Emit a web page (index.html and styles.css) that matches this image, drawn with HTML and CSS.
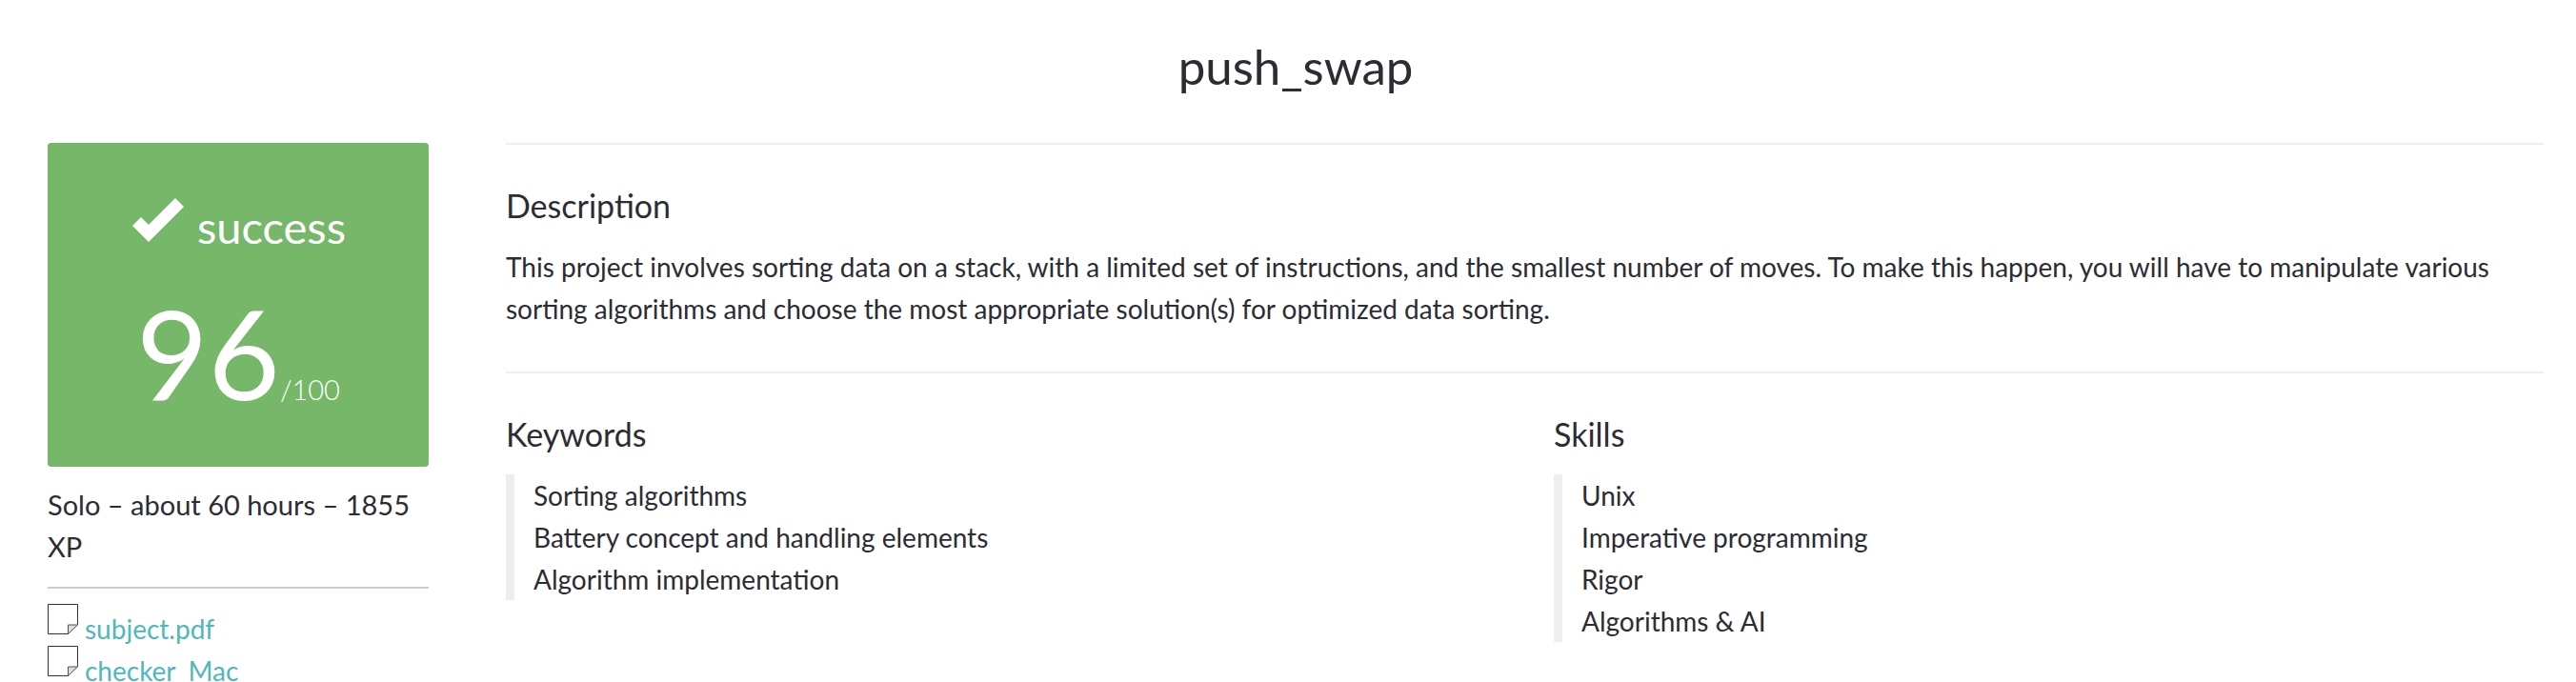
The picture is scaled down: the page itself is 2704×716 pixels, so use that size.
FILE: index.html
```html
<!DOCTYPE html>
<html lang="en">
<head>
    <meta charset="UTF-8">
    <title>push_swap</title>
    <link rel="stylesheet" href="styles.css">
</head>
<body>
    <h1 class="title">push_swap</h1>
    <div class="page">
        <aside class="side">
            <div class="grade">
                <div class="grade-status">
                    <svg class="check" viewBox="0 0 54 46"><path d="M0 29 L9 20 L17 28 L45 0 L54 9 L17 46 Z" fill="#fff"/></svg>
                    <span>success</span>
                </div>
                <div class="grade-mark"><span class="grade-num">96</span><span class="grade-max">/100</span></div>
            </div>
            <p class="meta">Solo – about 60 hours – 1855 XP</p>
            <hr class="side-rule">
            <ul class="files">
                <li>
                    <svg class="file-icon" viewBox="0 0 32 32"><path d="M.5.5H31.5V21.5L21.5 31.5H.5Z" fill="#fff" stroke="#333"/><path d="M21.5 31.5V22H31.5Z" fill="#ddd" stroke="#555"/></svg>
                    <a href="#">subject.pdf</a>
                </li>
                <li>
                    <svg class="file-icon" viewBox="0 0 32 32"><path d="M.5.5H31.5V21.5L21.5 31.5H.5Z" fill="#fff" stroke="#333"/><path d="M21.5 31.5V22H31.5Z" fill="#ddd" stroke="#555"/></svg>
                    <a href="#">checker_Mac</a>
                </li>
            </ul>
        </aside>
        <main class="content">
            <section class="block intro">
                <h2>Description</h2>
                <p>This project involves sorting data on a stack, with a limited set of instructions, and the smallest number of moves. To make this happen, you will have to manipulate various sorting algorithms and choose the most appropriate solution(s) for optimized data sorting.</p>
            </section>
            <section class="block columns">
                <div class="col">
                    <h2>Keywords</h2>
                    <ul class="tags">
                        <li>Sorting algorithms</li>
                        <li>Battery concept and handling elements</li>
                        <li>Algorithm implementation</li>
                    </ul>
                </div>
                <div class="col">
                    <h2>Skills</h2>
                    <ul class="tags">
                        <li>Unix</li>
                        <li>Imperative programming</li>
                        <li>Rigor</li>
                        <li>Algorithms &amp; AI</li>
                    </ul>
                </div>
            </section>
        </main>
    </div>
</body>
</html>
```

FILE: styles.css
```css
html, body {
    height: 716px;
    overflow: hidden;
}
body {
    margin: 0;
    padding: 0 34px 0 50px;
    background-color: #fff;
    color: #2c2c34;
    font-family: Lato, "Open Sans", sans-serif;
    font-size: 28px;
    line-height: 44px;
}
.title {
    margin: 0;
    height: 150px;
    padding-top: 37px;
    box-sizing: border-box;
    text-align: center;
    font-size: 51px;
    font-weight: 400;
    line-height: 66px;
}
.page {
    display: flex;
    gap: 81px;
}
.side {
    flex: 0 0 400px;
}
.grade {
    height: 340px;
    box-sizing: border-box;
    padding-top: 58px;
    background-color: #76b769;
    border-radius: 4px;
    color: #fff;
    text-align: center;
}
.grade-status {
    display: flex;
    justify-content: center;
    align-items: flex-end;
    gap: 14px;
    padding-left: 2px;
    font-size: 47px;
    line-height: 60px;
}
.check {
    width: 54px;
    height: 46px;
    margin-bottom: 14px;
}
.grade-mark {
    margin-top: 37px;
    display: flex;
    justify-content: center;
    align-items: flex-end;
}
.grade-num {
    font-size: 130px;
    line-height: 130px;
}
.grade-max {
    font-size: 29px;
    font-weight: 300;
    line-height: 50px;
    margin-bottom: 1px;
}
.meta {
    margin: 18px 0 0;
    font-size: 29px;
}
.side-rule {
    border: 0;
    border-top: 2px solid #ccc;
    margin: 20px 0 16px;
}
.files {
    list-style: none;
    margin: 0;
    padding: 0;
}
.files li {
    display: flex;
    align-items: flex-start;
    gap: 7px;
    height: 44px;
}
.file-icon {
    width: 32px;
    height: 32px;
    flex: none;
}
.files a {
    color: #4fb8ba;
    text-decoration: none;
    margin-top: 4px;
}
.content {
    flex: 1;
    min-width: 0;
}
.block {
    border-top: 2px solid #eee;
    padding-top: 42px;
}
.intro {
    height: 240px;
    box-sizing: border-box;
}
.block h2 {
    margin: 0 0 20px;
    font-size: 34px;
    font-weight: 400;
    line-height: 44px;
}
.block p {
    margin: 0;
}
.columns {
    display: flex;
}
.col {
    flex: 0 0 1100px;
}
.tags {
    list-style: none;
    margin: 0;
    padding: 0 0 0 20px;
    border-left: 9px solid #eee;
}
```
